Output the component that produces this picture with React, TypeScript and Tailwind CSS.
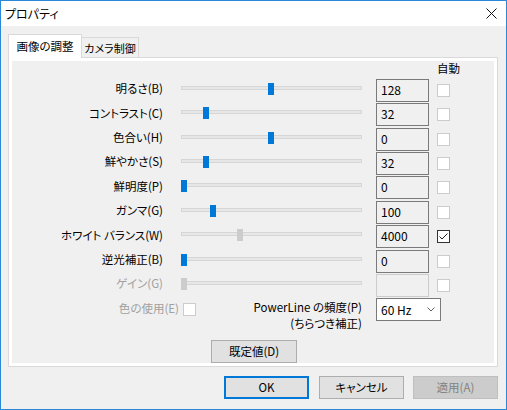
const rows = [
  { label: "明るさ(B)", thumb: 87, value: "128" },
  { label: "コントラスト(C)", thumb: 22, value: "32" },
  { label: "色合い(H)", thumb: 87, value: "0" },
  { label: "鮮やかさ(S)", thumb: 22, value: "32" },
  { label: "鮮明度(P)", thumb: 0, value: "0" },
  { label: "ガンマ(G)", thumb: 29, value: "100" },
  { label: "ホワイト バランス(W)", thumb: 56, value: "4000", auto: true, grayThumb: true },
  { label: "逆光補正(B)", thumb: 0, value: "0" },
  { label: "ゲイン(G)", thumb: 0, value: "", disabled: true, grayThumb: true },
];

const Checkbox = ({ checked = false }: { checked?: boolean }) => (
  <div
    className={`w-[13px] h-[13px] bg-white border flex items-center justify-center ${
      checked ? "border-[#333333]" : "border-[#cccccc]"
    }`}
  >
    {checked && (
      <svg width="11" height="11" viewBox="0 0 11 11" fill="none">
        <path d="M1.5 5.5 L4 8 L9.5 2.5" stroke="#222" strokeWidth="1" />
      </svg>
    )}
  </div>
);

const Button = ({ label, primary = false, disabled = false, w = "w-[85px]" }: { label: string; primary?: boolean; disabled?: boolean; w?: string }) => (
  <button
    className={`${w} h-[23px] flex items-center justify-center ${
      disabled
        ? "bg-[#cccccc] border border-[#bfbfbf] text-[#838383]"
        : primary
        ? "bg-[#e1e1e1] border-2 border-[#0078d7] text-black"
        : "bg-[#e1e1e1] border border-[#adadad] text-black"
    }`}
  >
    {label}
  </button>
);

export default function App() {
  return (
    <div
      className="w-[507px] h-[410px] border border-[#2b88d8] bg-[#f0f0f0] flex flex-col text-black text-[11.5px] [font-feature-settings:'palt']"
      style={{ fontFamily: '"Noto Sans CJK JP", "Noto Sans", sans-serif' }}
    >
      {/* Title bar */}
      <div className="h-[25px] bg-white flex items-center justify-between pl-[4px] pr-[9px]">
        <span className="leading-none text-[12px]">プロパティ</span>
        <svg width="11" height="11" viewBox="0 0 11 11" fill="none">
          <path d="M0.5 0.5 L10.5 10.5 M10.5 0.5 L0.5 10.5" stroke="#111" strokeWidth="1" />
        </svg>
      </div>

      <div className="flex flex-col pl-[7px] pr-[8px] pt-[8px]">
        {/* Tabs */}
        <div className="flex items-end">
          <div className="relative z-10 w-[74px] h-[24px] -mb-px bg-white border border-b-0 border-[#d9d9d9] flex items-center justify-center">
            画像の調整
          </div>
          <div className="w-[57px] h-[20px] border-t border-r border-[#d9d9d9] flex items-center justify-center pt-[1px] text-[11px]">
            カメラ制御
          </div>
        </div>

        {/* Panel */}
        <div className="h-[310px] border border-[#d9d9d9] bg-white p-[3px]">
          <div className="h-full bg-[#f0f0f0] flex flex-col">
            <div className="h-[18px] pl-[425px] leading-[14px]">自動</div>

            <div className="flex flex-col gap-[1.4px]">
              {rows.map((r) => (
                <div key={r.label} className="flex items-start h-[23px]">
                  <div
                    className={`w-[151px] h-[23px] flex items-center justify-end pb-[3px] whitespace-nowrap ${
                      r.disabled ? "text-[#a0a0a0]" : ""
                    }`}
                  >
                    {r.label}
                  </div>
                  <div className="relative ml-[18px] w-[181px] h-[23px]">
                    <div className="mt-[7px] h-[4px] bg-[#e7e7e7] border border-[#d6d6d6]" />
                    <div
                      className={`absolute top-[4px] w-[6px] h-[12px] ${
                        r.grayThumb ? "bg-[#cccccc]" : "bg-[#0078d7]"
                      }`}
                      style={{ left: r.thumb }}
                    />
                  </div>
                  <div
                    className={`ml-[14px] w-[53px] h-[23px] border flex items-center pl-[4px] pb-[1px] text-[12px] ${
                      r.disabled ? "border-[#cccccc]" : "border-[#7a7a7a]"
                    }`}
                  >
                    {r.value}
                  </div>
                  <div className="ml-[8px] mt-[5px]">
                    <Checkbox checked={r.auto} />
                  </div>
                </div>
              ))}
            </div>

            {/* Bottom controls */}
            <div className="flex items-start mt-[1px]">
              <div className="w-[184px] h-[23px] flex items-center justify-end gap-[4px]">
                <span className="text-[#a0a0a0] pb-[1px]">色の使用(E)</span>
                <Checkbox />
              </div>
              <div className="w-[166px] text-right leading-[16px] pt-[1px]">
                <div>PowerLine の頻度(P)</div>
                <div>(ちらつき補正)</div>
              </div>
              <div className="ml-[14px] w-[65px] h-[23px] bg-white border border-[#7a7a7a] flex items-center justify-between pl-[4px] pr-[5px] text-[12px]">
                <span>60 Hz</span>
                <svg width="8" height="5" viewBox="0 0 8 5" fill="none">
                  <path d="M0.5 0.5 L4 4 L7.5 0.5" stroke="#606060" strokeWidth="1" />
                </svg>
              </div>
            </div>

            <div className="mt-[9px] pl-[199px]">
              <Button label="既定値(D)" w="w-[86px]" />
            </div>
          </div>
        </div>

        {/* Dialog buttons */}
        <div className="flex justify-end mt-[9px]">
          <Button label="OK" primary />
          <div className="ml-[10px]">
            <Button label="キャンセル" />
          </div>
          <div className="ml-[9px]">
            <Button label="適用(A)" disabled />
          </div>
        </div>
      </div>
    </div>
  );
}
